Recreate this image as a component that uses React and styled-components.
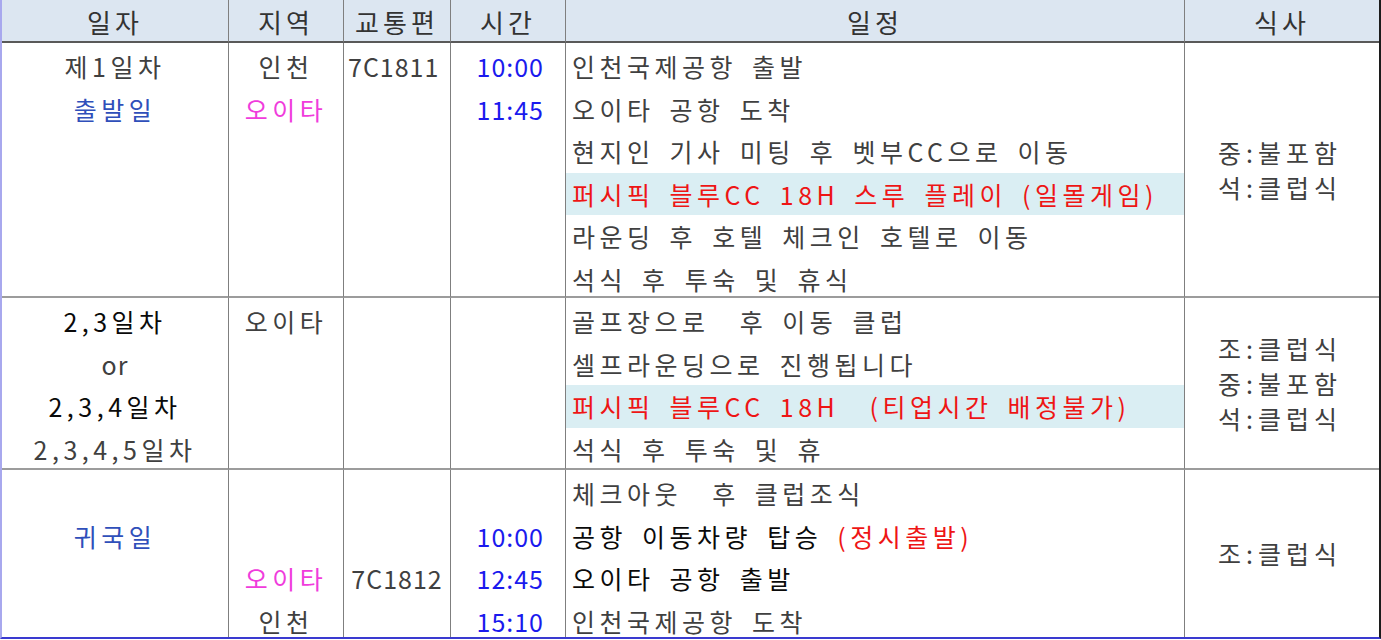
import React from "react";
import styled, { createGlobalStyle } from "styled-components";

const GlobalStyle = createGlobalStyle`
  html, body {
    margin: 0;
    padding: 0;
    background: #ffffff;
  }
  body {
    font-family: "Noto Sans CJK KR", "Noto Sans", sans-serif;
  }
`;

const tones = {
  gray: "#404040",
  black: "#0a0a0a",
  navy: "#2f4fba",
  blue: "#1a1aee",
  pink: "#f03cdc",
  red: "#ee1515",
};

const Sheet = styled.div`
  display: grid;
  grid-template-columns: 227px 115px 107px 115px 619px 194px;
  grid-template-rows: 43px 255px 172px 167px;
  width: 1381px;
  box-sizing: border-box;
  border-left: 2px solid #a8a8ee;
  border-right: 2px solid #1c1c1c;
  border-bottom: 2px solid #3a3ad0;
  font-size: 25px;
  font-weight: 400;
  letter-spacing: 4.5px;
  word-spacing: 5px;
  color: ${tones.gray};
`;

const HeadCell = styled.div`
  display: flex;
  align-items: center;
  justify-content: center;
  background: #dce6f1;
  border-bottom: 2px solid #595959;
  border-right: ${(p) => (p.$last ? "none" : "1px solid #7f7f7f")};
  box-sizing: border-box;
  color: #333333;
  font-size: 26px;
  letter-spacing: 4px;
  padding-top: 2px;
`;

const Line = styled.div`
  height: 42.5px;
  line-height: 42.5px;
  white-space: pre;
  color: ${(p) => tones[p.$tone || "gray"]};
  background: ${(p) => (p.$hl ? "#daeef3" : "transparent")};
  letter-spacing: ${(p) => (p.$tight ? "1px" : "inherit")};
`;

const Cell = styled.div`
  display: flex;
  flex-direction: column;
  box-sizing: border-box;
  overflow: hidden;
  padding-top: 2px;
  text-align: ${(p) => p.$align || "center"};
  border-right: ${(p) => (p.$last ? "none" : "1px solid #7f7f7f")};
  border-bottom: ${(p) => (p.$end ? "none" : "2px solid #9c9c9c")};

  ${Line} {
    padding: 0 ${(p) => p.$padR || 0}px 0 ${(p) => p.$padL || 0}px;
  }
`;

const MealCell = styled(Cell)`
  justify-content: center;
  padding-top: 0;
  padding-right: 4px;

  ${Line} {
    height: 35px;
    line-height: 35px;
    letter-spacing: 5px;
  }
`;

const Span = styled.span`
  color: ${(p) => tones[p.$tone]};
`;

const Gap = () => <Line> </Line>;

const headers = ["일자", "지역", "교통편", "시간", "일정", "식사"];

export default function App() {
  return (
    <>
      <GlobalStyle />
      <Sheet>
        {headers.map((h, i) => (
          <HeadCell key={h} $last={i === headers.length - 1}>
            {h}
          </HeadCell>
        ))}

        {/* 제1일차 */}
        <Cell>
          <Line>제1일차</Line>
          <Line $tone="navy">출발일</Line>
        </Cell>
        <Cell>
          <Line>인천</Line>
          <Line $tone="pink">오이타</Line>
        </Cell>
        <Cell $align="left" $padL={4}>
          <Line $tight>7C1811</Line>
        </Cell>
        <Cell $align="right" $padR={21}>
          <Line $tone="blue" $tight>10:00</Line>
          <Line $tone="blue" $tight>11:45</Line>
        </Cell>
        <Cell $align="left" $padL={6}>
          <Line>인천국제공항 출발</Line>
          <Line>오이타 공항 도착</Line>
          <Line>현지인 기사 미팅 후 벳부CC으로 이동</Line>
          <Line $tone="red" $hl>
            퍼시픽 블루CC 18H 스루 플레이 (일몰게임)
          </Line>
          <Line>라운딩 후 호텔 체크인 호텔로 이동</Line>
          <Line>석식 후 투숙 및 휴식</Line>
        </Cell>
        <MealCell $last>
          <Line>중:불포함</Line>
          <Line>석:클럽식</Line>
        </MealCell>

        {/* 2,3일차 */}
        <Cell>
          <Line $tone="black">2,3일차</Line>
          <Line $tight>or</Line>
          <Line $tone="black">2,3,4일차</Line>
          <Line>2,3,4,5일차</Line>
        </Cell>
        <Cell>
          <Line>오이타</Line>
        </Cell>
        <Cell />
        <Cell />
        <Cell $align="left" $padL={6}>
          <Line>골프장으로  후 이동 클럽</Line>
          <Line>셀프라운딩으로 진행됩니다</Line>
          <Line $tone="red" $hl>
            퍼시픽 블루CC 18H  (티업시간 배정불가)
          </Line>
          <Line>석식 후 투숙 및 휴</Line>
        </Cell>
        <MealCell $last>
          <Line>조:클럽식</Line>
          <Line>중:불포함</Line>
          <Line>석:클럽식</Line>
        </MealCell>

        {/* 귀국일 */}
        <Cell $end>
          <Gap />
          <Line $tone="navy">귀국일</Line>
        </Cell>
        <Cell $end>
          <Gap />
          <Gap />
          <Line $tone="pink">오이타</Line>
          <Line>인천</Line>
        </Cell>
        <Cell $end>
          <Gap />
          <Gap />
          <Line $tight>7C1812</Line>
        </Cell>
        <Cell $end $align="right" $padR={21}>
          <Gap />
          <Line $tone="blue" $tight>10:00</Line>
          <Line $tone="blue" $tight>12:45</Line>
          <Line $tone="blue" $tight>15:10</Line>
        </Cell>
        <Cell $end $align="left" $padL={6}>
          <Line>체크아웃  후 클럽조식</Line>
          <Line $tone="black">
            공항 이동차량 탑승 <Span $tone="red">(정시출발)</Span>
          </Line>
          <Line $tone="black">오이타 공항 출발</Line>
          <Line>인천국제공항 도착</Line>
        </Cell>
        <MealCell $end $last>
          <Line>조:클럽식</Line>
        </MealCell>
      </Sheet>
    </>
  );
}
